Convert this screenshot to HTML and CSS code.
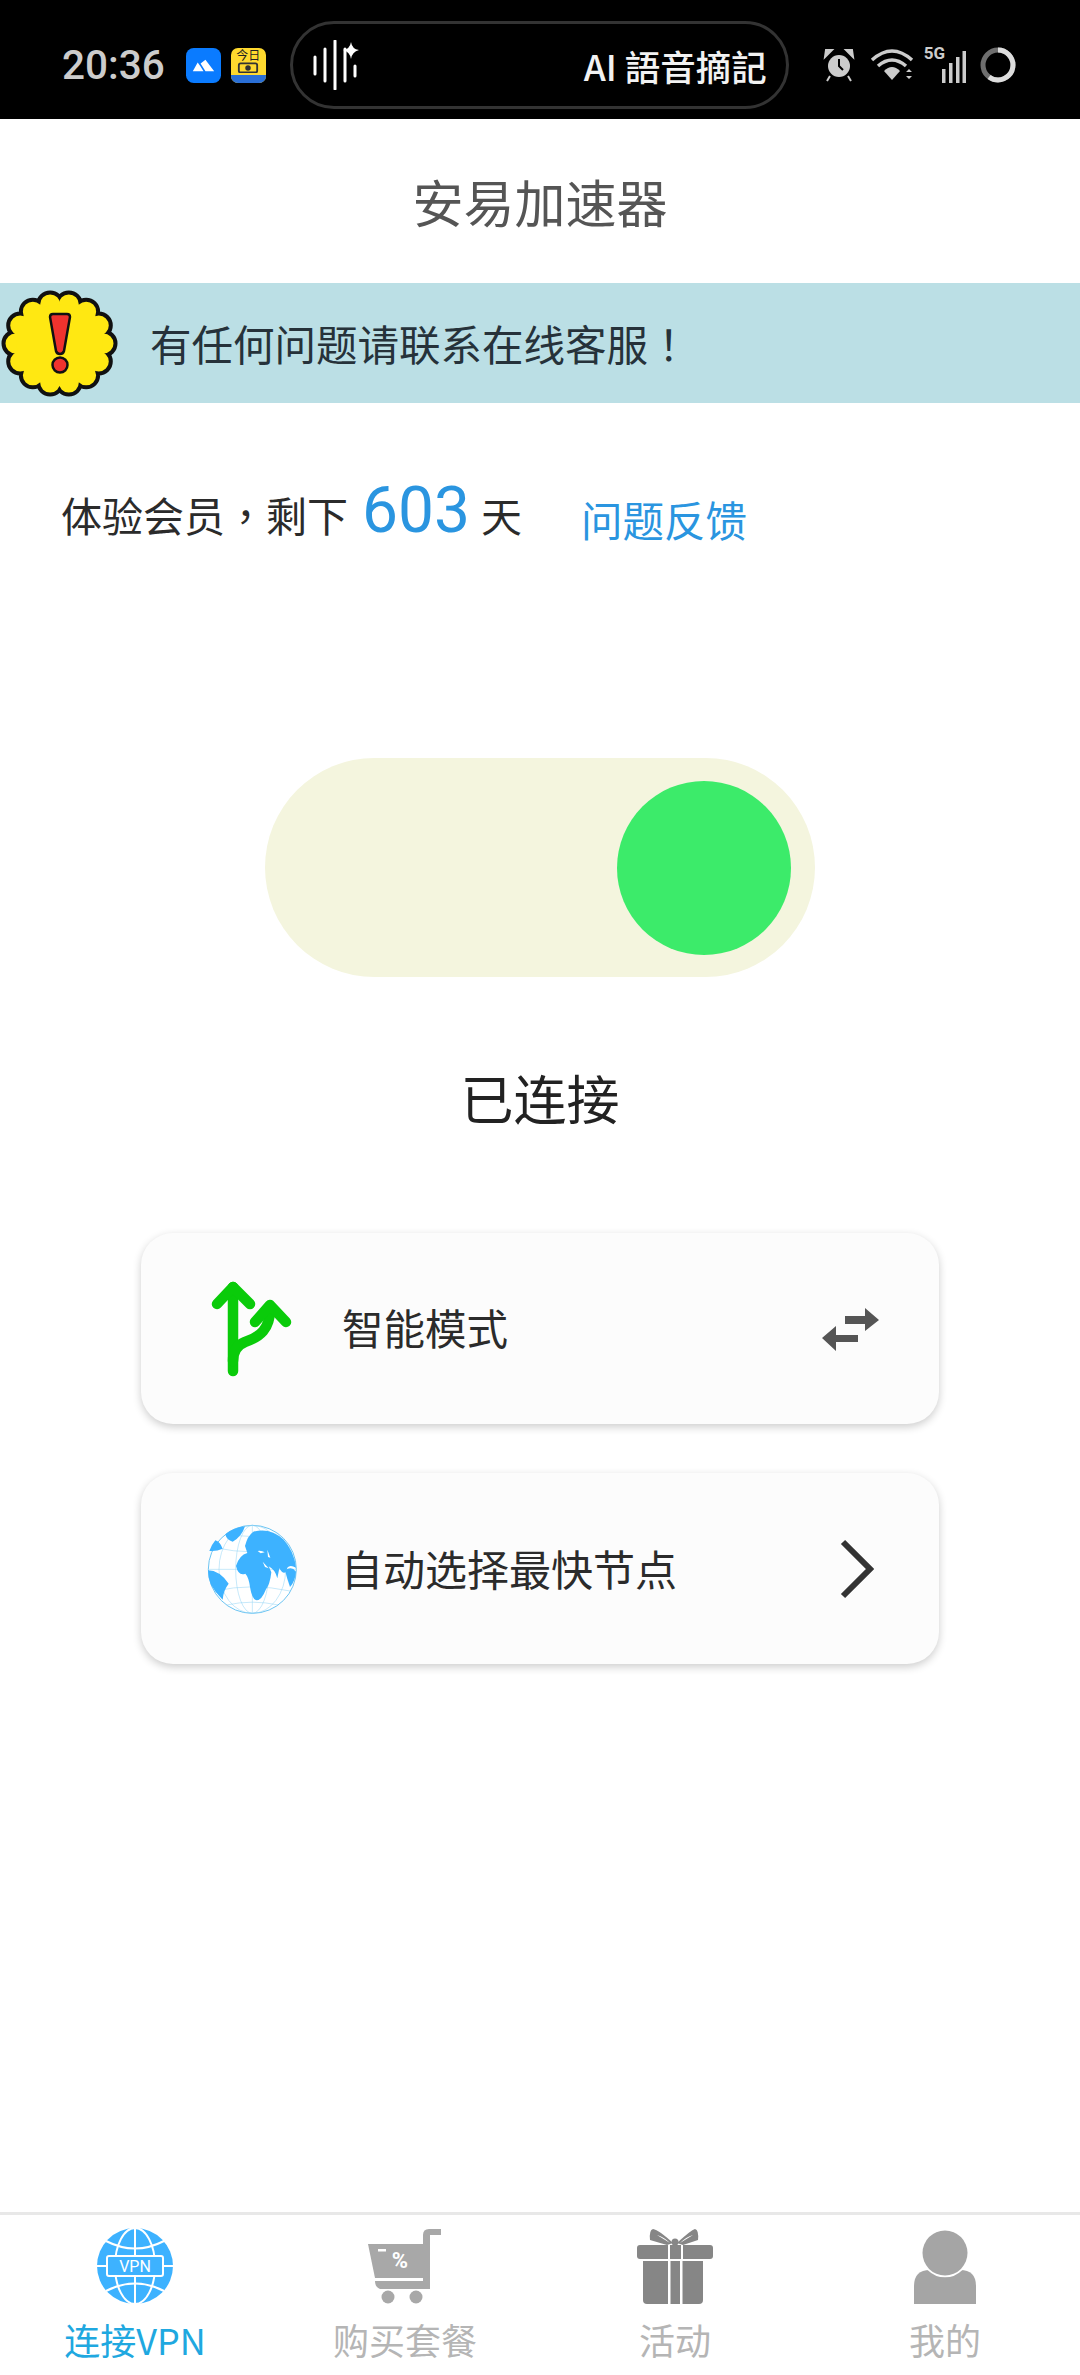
FILE: index.html

```html
<!DOCTYPE html>
<html lang="zh-CN">
<head>
  <meta charset="UTF-8" />
  <title>安易加速器</title>
  <link rel="stylesheet" href="styles.css">
</head>
<body>
  <div class="status-bar">
    <span class="clock">20:36</span>
    <svg class="app-icon blue-app" viewBox="0 0 36 36">
      <rect width="36" height="36" rx="8" fill="#0a7bff"/>
      <path d="M7 24 L12 15 L15 19 L18 24 Z M15 16 L20 12 L29 24 L20 24 Z" fill="#fff"/>
    </svg>
    <div class="app-icon yellow-app">
      <span class="today">今日</span>
      <svg class="camera" viewBox="0 0 24 12">
        <rect x="2" y="2" width="20" height="10" rx="2" fill="none" stroke="#333" stroke-width="2"/>
        <circle cx="12" cy="7" r="3" fill="#333"/>
      </svg>
      <span class="strip"></span>
    </div>
    <div class="pill">
      <svg class="wave" viewBox="0 0 46 50" width="46" height="50">
        <g stroke="#fff" stroke-width="3" stroke-linecap="round">
          <line x1="2" y1="17" x2="2" y2="34"/>
          <line x1="12" y1="9" x2="12" y2="41"/>
          <line x1="22" y1="1" x2="22" y2="49"/>
          <line x1="32" y1="9" x2="32" y2="41"/>
          <line x1="42" y1="26" x2="42" y2="36"/>
        </g>
        <path d="M38 2 Q39 9 46 10 Q39 12 38 19 Q37 12 30 10 Q37 9 38 2 Z" fill="#fff"/>
      </svg>
      <span class="pill-text" lang="zh-TW">AI 語音摘記</span>
    </div>
    <svg class="alarm" viewBox="0 0 32 34" width="32" height="34">
      <circle cx="16" cy="18" r="11" fill="#ccc"/>
      <path d="M16 11 V18 L20 22" stroke="#000" stroke-width="2" fill="none"/>
      <path d="M2 9 L9 2 L3 2 Z M30 9 L23 2 L29 2 Z" fill="#ccc" stroke="#ccc" stroke-width="2"/>
      <path d="M7 28 L4 33 M25 28 L28 33" stroke="#ccc" stroke-width="2"/>
    </svg>
    <svg class="wifi" viewBox="0 0 44 34" width="44" height="34">
      <g fill="none" stroke="#ccc" stroke-width="3.5">
        <path d="M2 12 Q22 -6 42 12"/>
        <path d="M8 18 Q22 6 36 18"/>
      </g>
      <path d="M14 23 Q22 15 30 23 L22 32 Z" fill="#ccc"/>
      <path d="M36 24 L39 21 L42 24 Z M36 28 L42 28 L39 31 Z" fill="#ccc"/>
    </svg>
    <div class="signal">
      <span class="five-g">5G</span>
      <svg viewBox="0 0 24 34" width="24" height="34">
        <g fill="#ccc">
          <rect x="0" y="20" width="3.5" height="14"/>
          <rect x="7" y="14" width="3.5" height="20"/>
          <rect x="14" y="8" width="3.5" height="26"/>
          <rect x="20.5" y="2" width="3.5" height="32"/>
        </g>
      </svg>
    </div>
    <svg class="ring" viewBox="0 0 36 36" width="36" height="36">
      <circle cx="18" cy="18" r="15" fill="none" stroke="#6e6e6e" stroke-width="5"/>
      <path d="M18 3 A15 15 0 0 1 18 33 A15 15 0 0 1 9 30" fill="none" stroke="#ddd" stroke-width="5"/>
    </svg>
  </div>

  <div class="title-bar">安易加速器</div>

  <div class="notice">
    <svg class="flower" viewBox="0 0 117 109">
      <ellipse class="scallop-out" cx="58.5" cy="54.5" rx="44" ry="40" pathLength="280"/>
      <ellipse class="scallop-in" cx="58.5" cy="54.5" rx="44" ry="40" pathLength="280"/>
      <ellipse cx="58.5" cy="54.5" rx="43" ry="39" fill="#ffe812"/>
      <path d="M49 28 Q49 25 52 25 H66 Q69 25 69 28 L63 62 Q62 65 59 65 Q56 65 55 62 Z" fill="#f0332e" stroke="#111" stroke-width="2.5"/>
      <circle cx="59" cy="76" r="7.5" fill="#f0332e" stroke="#111" stroke-width="2.5"/>
    </svg>
    <span class="notice-text">有任何问题请联系在线客服<span class="punct" lang="zh-TW">！</span></span>
  </div>

  <div class="member-row">
    <span class="member-text">体验会员<span class="punct" lang="zh-TW">，</span>剩下</span>
    <span class="days">603</span>
    <span class="member-text">天</span>
    <a class="feedback">问题反馈</a>
  </div>

  <div class="toggle">
    <div class="knob"></div>
  </div>
  <div class="conn-state">已连接</div>

  <div class="card first-card">
    <svg class="card-icon branch" viewBox="0 0 100 100">
      <g fill="none" stroke="#0acb0a" stroke-width="10.5" stroke-linecap="round" stroke-linejoin="round">
        <path d="M28 8 V92"/>
        <path d="M12 25 L28 8 L45 25"/>
        <path d="M65 30 C65 50 55 58 40 63 C32 66 28 72 28 82"/>
        <path d="M50 43 L65 26 L81 43"/>
      </g>
    </svg>
    <span class="card-label">智能模式</span>
    <svg class="swap" viewBox="0 0 57 46" width="57" height="46">
      <path d="M23 10 H43 V2 L57 14 L43 25 V18 H23 Z M14 20 L0 32 L14 45 V36 H36 V29 H14 Z" fill="#555"/>
    </svg>
  </div>

  <div class="card">
    <svg class="card-icon" viewBox="36 54 300 300">
      <circle cx="187" cy="205" r="132" fill="#fff" stroke="#6cc4f2" stroke-width="3"/>
      <g fill="none" stroke="#8fd2f5" stroke-width="1.5">
        <ellipse cx="187" cy="205" rx="50" ry="132"/>
        <ellipse cx="187" cy="205" rx="100" ry="132"/>
        <line x1="187" y1="73" x2="187" y2="337"/>
        <line x1="55" y1="205" x2="319" y2="205"/>
        <path d="M75 140 Q187 165 300 140"/>
        <path d="M75 270 Q187 245 300 270"/>
        <path d="M110 98 Q187 115 265 98"/>
        <path d="M110 312 Q187 295 265 312"/>
      </g>
      <path d="M165 135 Q172 105 190 92 Q240 78 280 115 Q312 150 318 200 Q300 190 292 200 Q285 230 268 202 L262 232 Q255 205 236 196 L244 214 Q240 250 228 265 Q215 298 200 298 Q186 296 180 258 Q176 228 166 218 Q145 226 138 195 Q148 162 172 156 Z" fill="#3db2ff"/>
      <path d="M58 150 Q80 152 98 143 Q90 122 76 118 Q64 132 58 150 Z M106 100 Q128 80 165 76 Q155 108 128 122 Q110 118 106 100 Z M54 208 Q88 208 116 248 Q100 268 98 296 Q76 276 62 250 Q54 230 54 208 Z" fill="#3db2ff"/>
      <path d="M203 150 Q215 148 224 154 L212 157 Z M232 146 L241 170 L234 168 Z M218 182 L236 202 L225 198 Z" fill="#fff"/>
      <path d="M285 208 Q305 194 318 212 Q316 240 300 258 Q290 230 285 208 Z" fill="#3db2ff"/>
    </svg>
    <span class="card-label second-label">自动选择最快节点</span>
    <svg class="chevron" viewBox="0 0 34 60" width="34" height="60">
      <path d="M3 3 L30 30 L3 57" fill="none" stroke="#333" stroke-width="6"/>
    </svg>
  </div>

  <div class="tabbar">
    <div class="tab active">
      <svg class="tab-icon" viewBox="0 0 76 76">
        <circle cx="38" cy="38" r="38" fill="#3db2ff"/>
        <g fill="none" stroke="#fff" stroke-width="2">
          <ellipse cx="38" cy="38" rx="20" ry="38"/>
          <line x1="38" y1="0" x2="38" y2="76"/>
          <line x1="0" y1="38" x2="76" y2="38"/>
          <path d="M9 13 Q38 28 67 13"/>
          <path d="M9 63 Q38 48 67 63"/>
        </g>
        <rect x="10" y="28" width="56" height="20" rx="2" fill="#3db2ff" stroke="#fff" stroke-width="2"/>
        <text class="vpn-mark" x="38" y="44" text-anchor="middle">VPN</text>
      </svg>
      <span class="tab-label">连接VPN</span>
    </div>
    <div class="tab">
      <svg class="tab-icon" viewBox="0 0 74 76">
        <path d="M0 16 H55 V50 H7 Z" fill="#a8a8a8"/>
        <path d="M55 7 Q55 1 61 1 H73 V7 H62 V61 H12 Q7 59 7 53 H55 Z" fill="#a8a8a8"/>
        <circle cx="20" cy="69" r="6.5" fill="#a8a8a8"/>
        <circle cx="48" cy="69" r="6.5" fill="#a8a8a8"/>
        <rect x="10" y="21" width="8" height="2.5" fill="#fff"/>
        <text class="cart-mark" x="32" y="40" text-anchor="middle">%</text>
      </svg>
      <span class="tab-label">购买套餐</span>
    </div>
    <div class="tab">
      <svg class="tab-icon" viewBox="0 0 76 76">
        <g fill="#868686">
          <rect x="0" y="17" width="76" height="14" rx="3"/>
          <path d="M6 33 H66 V72 Q66 76 62 76 H10 Q6 76 6 72 Z"/>
          <path d="M36 15 Q22 2 16 1 Q12 2 13 12 L30 17 Z"/>
          <path d="M40 15 Q54 2 58 1 Q62 2 61 12 L46 17 Z"/>
        </g>
        <path d="M20 7 Q27 9 33 15 Z M56 7 Q49 9 43 15 Z" fill="#fff"/>
        <circle cx="38" cy="14" r="3.5" fill="#868686"/>
        <rect x="31" y="33" width="2.5" height="43" fill="#fff"/>
        <rect x="43" y="33" width="2.5" height="43" fill="#fff"/>
        <rect x="31" y="17" width="2" height="14" fill="#fff"/>
        <rect x="44" y="17" width="2" height="14" fill="#fff"/>
      </svg>
      <span class="tab-label">活动</span>
    </div>
    <div class="tab">
      <svg class="tab-icon person" viewBox="0 0 62 76">
        <path d="M0 76 V58 Q0 42 16 42 H46 Q62 42 62 58 V76 Z" fill="#a5a5a5"/>
        <circle cx="31" cy="25" r="22.5" fill="#a5a5a5" stroke="#fff" stroke-width="3.5" paint-order="stroke"/>
      </svg>
      <span class="tab-label">我的</span>
    </div>
  </div>
</body>
</html>
```

FILE: styles.css

```css
body {
  margin: 0;
  height: 2375px;
  display: flex;
  flex-direction: column;
  background: #fff;
  font-family: "Noto Sans CJK SC", "Noto Sans", sans-serif;
  color: #222;
}

/* status bar */
.status-bar {
  height: 119px;
  flex-shrink: 0;
  background: #000;
  display: flex;
  align-items: center;
  padding-left: 62px;
  padding-top: 11px;
  box-sizing: border-box;
}
.clock {
  flex-shrink: 0;
  margin-right: 21px;
  font-family: Roboto, sans-serif;
  font-size: 40.5px;
  font-weight: 500;
  color: #ccc;
  white-space: nowrap;
}
.app-icon {
  width: 35px;
  height: 35px;
  flex-shrink: 0;
}
.yellow-app {
  margin-left: 10px;
  background: #ffd92e;
  border-radius: 7px;
  display: flex;
  flex-direction: column;
  align-items: center;
}
.today {
  font-size: 12px;
  line-height: 13px;
  color: #222;
}
.camera {
  width: 22px;
  height: 12px;
}
.strip {
  display: block;
  width: 100%;
  height: 8px;
  margin-top: 2px;
  background: #2a6fd6;
  border-radius: 0 0 7px 7px;
}
.pill {
  width: 499px;
  height: 88px;
  margin-left: 24px;
  box-sizing: border-box;
  border: 3px solid #333;
  border-radius: 44px;
  padding: 0 19px 0 20px;
  display: flex;
  align-items: center;
  justify-content: space-between;
}
.pill-text {
  font-family: "Noto Sans CJK TC", sans-serif;
  font-size: 35.5px;
  font-weight: 500;
  color: #f2f2f2;
  white-space: nowrap;
}
.alarm { margin-left: 34px; }
.wifi { margin-left: 15px; }
.signal {
  margin-left: 10px;
  width: 42px;
  height: 36px;
  display: flex;
  align-items: flex-end;
  justify-content: flex-end;
  position: relative;
}
.five-g {
  position: absolute;
  left: 0;
  top: -4px;
  font-family: Roboto, sans-serif;
  font-size: 17px;
  font-weight: 700;
  color: #ccc;
}
.ring { margin-left: 14px; }

/* header and notice */
.title-bar {
  height: 164px;
  flex-shrink: 0;
  display: flex;
  align-items: center;
  justify-content: center;
  font-size: 51px;
  color: #555;
}
.notice {
  height: 120px;
  flex-shrink: 0;
  background: #bbdfe5;
  display: flex;
  align-items: center;
  padding-left: 1px;
}
.flower {
  width: 117px;
  height: 109px;
  flex-shrink: 0;
}
.scallop-out, .scallop-in {
  fill: none;
  stroke-linecap: round;
  stroke-dasharray: 0 20;
}
.scallop-out {
  stroke: #111;
  stroke-width: 28;
}
.scallop-in {
  stroke: #ffe812;
  stroke-width: 20;
}
.notice-text {
  margin-left: 32px;
  font-size: 41.5px;
  color: #26323a;
  white-space: nowrap;
}
/* traditional face centres full-width punctuation in its box */
.punct { font-family: "Noto Sans CJK TC", sans-serif; }

/* member row */
.member-row {
  height: 80px;
  margin-top: 70px;
  padding-left: 61px;
  display: flex;
  align-items: baseline;
  white-space: nowrap;
}
.member-text {
  font-size: 41px;
  color: #2b2b2b;
}
.days {
  margin: 0 11px 0 14px;
  font-family: Roboto, sans-serif;
  font-size: 64px;
  color: #2a95e0;
}
.feedback {
  align-self: flex-start;
  margin-left: 59px;
  margin-top: 16px;
  font-size: 41.5px;
  color: #2a95e0;
}

/* switch */
.toggle {
  width: 550px;
  height: 219px;
  margin: 205px auto 0;
  padding-right: 24px;
  box-sizing: border-box;
  border-radius: 110px;
  background: #f4f5de;
  display: flex;
  align-items: center;
  justify-content: flex-end;
}
.knob {
  width: 174px;
  height: 174px;
  border-radius: 50%;
  background: #3ceb6a;
}
.conn-state {
  margin-top: 90px;
  height: 60px;
  line-height: 60px;
  text-align: center;
  font-size: 53px;
  color: #222;
}

/* cards */
.card {
  width: 798px;
  height: 191px;
  margin: 49px auto 0;
  box-sizing: border-box;
  padding: 0 60px 0 61px;
  background: #fcfcfc;
  border-radius: 32px;
  box-shadow: 0 3px 8px rgba(0, 0, 0, 0.2);
  display: flex;
  align-items: center;
  flex-shrink: 0;
}
.first-card { margin-top: 106px; }
.card-icon {
  width: 100px;
  height: 100px;
  flex-shrink: 0;
}
.branch { margin-left: 3px; }
.card-label {
  margin-left: 37px;
  margin-bottom: 3px;
  font-size: 41.5px;
  color: #2b2b2b;
  white-space: nowrap;
}
.second-label {
  margin-left: 39px;
  font-size: 42px;
}
.swap, .chevron { margin-left: auto; }
.chevron { margin-right: 5px; }

/* bottom tabs */
.tabbar {
  margin-top: auto;
  height: 163px;
  box-sizing: border-box;
  border-top: 3px solid #e8e8e8;
  padding-top: 13px;
  display: flex;
  flex-shrink: 0;
}
.tab {
  width: 270px;
  display: flex;
  flex-direction: column;
  align-items: center;
}
.tab-icon {
  width: 76px;
  height: 76px;
}
.person { width: 62px; }
.tab-label {
  margin-top: 10px;
  height: 50px;
  line-height: 50px;
  font-size: 36px;
  color: #b5b5b5;
  white-space: nowrap;
}
.tab.active .tab-label { color: #1fa8e0; }
.vpn-mark {
  font-family: Roboto, sans-serif;
  font-size: 16px;
  fill: #fff;
}
.cart-mark {
  font-family: Roboto, sans-serif;
  font-size: 22px;
  font-weight: 700;
  fill: #fff;
}
```
